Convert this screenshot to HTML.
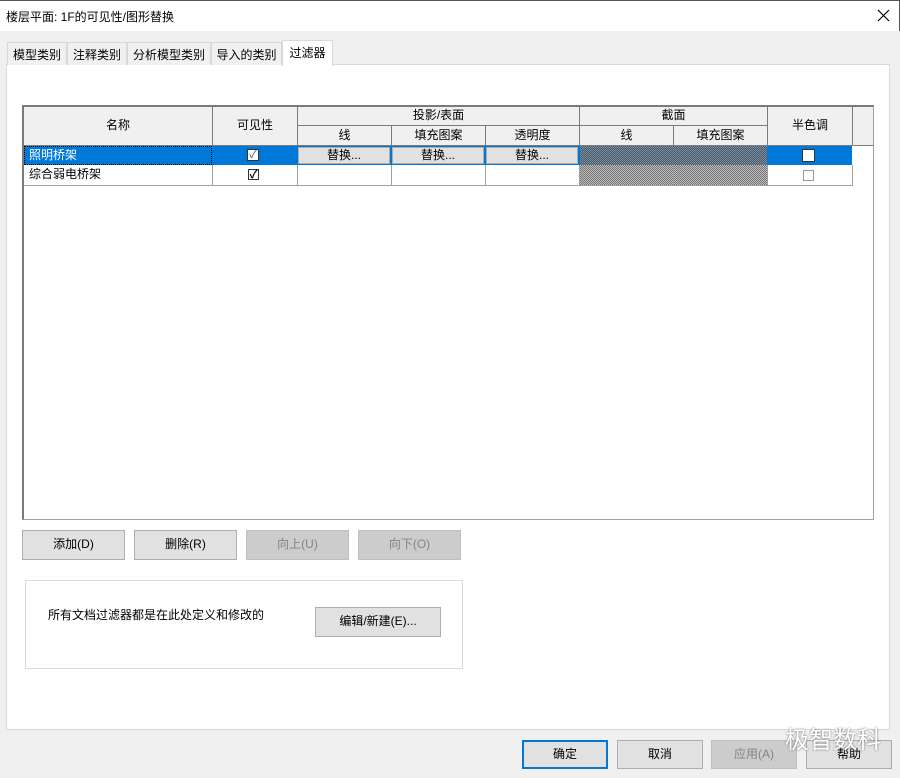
<!DOCTYPE html>
<html><head><meta charset="utf-8"><style>
*{box-sizing:border-box;margin:0;padding:0}
body{width:900px;height:778px;background:#f0f0f0;font-family:"Liberation Sans","Noto Sans CJK SC",sans-serif;font-size:12px;color:#000;position:relative;overflow:hidden}
.a{position:absolute}
.title{left:0;top:0;width:900px;height:31px;background:#fff;border-top:1px solid #555;border-right:1px solid #555}
.tab{top:42px;height:23px;background:#f0f0f0;border:1px solid #d9d9d9;border-bottom:none;padding:3px 0 0;text-align:center}
.panel{left:6px;top:64px;width:884px;height:666px;background:#fff;border:1px solid #d9d9d9}
.c{position:absolute;border-right:1px solid #a0a0a0;border-bottom:1px solid #a0a0a0;text-align:center;line-height:19px}
.h{background:#f0f0f0;border-color:#7a7a7a}
.btn{position:absolute;background:#e1e1e1;border:1px solid #adadad;text-align:center;line-height:26px}
.dis{background:#cccccc;border-color:#bfbfbf;color:#838383}
.rb{position:absolute;top:1px;height:17px;background:#e1e1e1;border:1px solid #adadad;line-height:15px;text-align:center}
.hat{background-color:#999;background-image:repeating-conic-gradient(#777 0 25%,#bbb 0 50%);background-size:2px 2px}
.cb{position:absolute;width:12px;height:12px;border:1px solid #333;background:#fff;font-size:11px;line-height:10px;text-align:center}
</style></head><body>
<div class="a title"><div class="a" style="left:6px;top:7px;font-size:12px">楼层平面: 1F的可见性/图形替换</div>
<svg class="a" style="left:877px;top:8px" width="13" height="13"><path d="M1 1L12 12M12 1L1 12" stroke="#000" stroke-width="1.2"/></svg></div>
<div class="a panel"></div>
<div class="a tab" style="left:7px;width:60px">模型类别</div>
<div class="a tab" style="left:67px;width:60px">注释类别</div>
<div class="a tab" style="left:127px;width:84px">分析模型类别</div>
<div class="a tab" style="left:211px;width:71px">导入的类别</div>
<div class="a tab" style="left:282px;top:40px;height:26px;width:51px;background:#fff;border-color:#d9d9d9;padding-top:3px">过滤器</div>

<div class="a" style="left:22px;top:105px;width:852px;height:415px;background:#fff;border:1px solid #a0a0a0;border-top:2px solid #7a7a7a;border-left:2px solid #7a7a7a"></div>
<div class="c h" style="left:24px;top:107px;width:189px;height:39px;line-height:37px">名称</div>
<div class="c h" style="left:213px;top:107px;width:85px;height:39px;line-height:37px">可见性</div>
<div class="c h" style="left:298px;top:107px;width:282px;height:19px;line-height:17px">投影/表面</div>
<div class="c h" style="left:580px;top:107px;width:188px;height:19px;line-height:17px">截面</div>
<div class="c h" style="left:768px;top:107px;width:85px;height:39px;line-height:37px">半色调</div>
<div class="c h" style="left:853px;top:107px;width:20px;height:39px;border-right:none"></div>
<div class="c h" style="left:298px;top:126px;width:94px;height:20px">线</div>
<div class="c h" style="left:392px;top:126px;width:94px;height:20px">填充图案</div>
<div class="c h" style="left:486px;top:126px;width:94px;height:20px">透明度</div>
<div class="c h" style="left:580px;top:126px;width:94px;height:20px">线</div>
<div class="c h" style="left:674px;top:126px;width:94px;height:20px">填充图案</div>

<div class="a" style="left:24px;top:146px;width:828px;height:19px;background:#0078d7"></div>
<div class="a" style="left:24px;top:146px;width:188px;height:19px;border:1px dotted #000"></div>
<div class="a" style="left:29px;top:146px;line-height:18px;color:#fff">照明桥架</div>
<div class="cb" style="left:247px;top:149px;border-color:#333;color:#555">✓</div>
<div class="a" style="left:297px;top:146px;width:283px;height:19px">
<div class="rb" style="left:1px;width:92px">替换...</div>
<div class="rb" style="left:95px;width:92px">替换...</div>
<div class="rb" style="left:189px;width:92px">替换...</div></div>
<div class="a hat" style="left:580px;top:146px;width:187px;height:19px;background-color:#555;background-image:repeating-conic-gradient(#3a5f80 0 25%,#888 0 50%)"></div>
<div class="cb" style="left:802px;top:149px;width:13px;height:13px"></div>

<div class="c" style="left:24px;top:165px;width:189px;height:21px;text-align:left;padding-left:5px">综合弱电桥架</div>
<div class="c" style="left:213px;top:165px;width:85px;height:21px"></div>
<div class="cb" style="left:248px;top:169px;width:11px;height:11px;font-weight:bold">✓</div>
<div class="c" style="left:298px;top:165px;width:94px;height:21px"></div>
<div class="c" style="left:392px;top:165px;width:94px;height:21px"></div>
<div class="c" style="left:486px;top:165px;width:94px;height:21px"></div>
<div class="c hat" style="left:580px;top:165px;width:94px;height:21px"></div>
<div class="c hat" style="left:674px;top:165px;width:94px;height:21px"></div>
<div class="c" style="left:768px;top:165px;width:85px;height:21px"></div>
<div class="cb" style="left:803px;top:170px;width:11px;height:11px;border-color:#999"></div>

<div class="btn" style="left:22px;top:530px;width:103px;height:30px">添加(D)</div>
<div class="btn" style="left:134px;top:530px;width:103px;height:30px">删除(R)</div>
<div class="btn dis" style="left:246px;top:530px;width:103px;height:30px">向上(U)</div>
<div class="btn dis" style="left:358px;top:530px;width:103px;height:30px">向下(O)</div>

<div class="a" style="left:25px;top:580px;width:438px;height:89px;border:1px solid #dcdcdc"></div>
<div class="a" style="left:48px;top:606px">所有文档过滤器都是在此处定义和修改的</div>
<div class="btn" style="left:315px;top:607px;width:126px;height:30px">编辑/新建(E)...</div>

<div class="btn" style="left:522px;top:740px;width:86px;height:29px;border:2px solid #0078d7;line-height:25px">确定</div>
<div class="btn" style="left:617px;top:740px;width:86px;height:29px">取消</div>
<div class="btn dis" style="left:711px;top:740px;width:86px;height:29px">应用(A)</div>
<div class="btn" style="left:806px;top:740px;width:86px;height:29px">帮助</div>
<div class="a" style="left:785px;top:720px;font-size:24px;color:#fff;text-shadow:0 0 2px #666">极智数科</div>
</body></html>
